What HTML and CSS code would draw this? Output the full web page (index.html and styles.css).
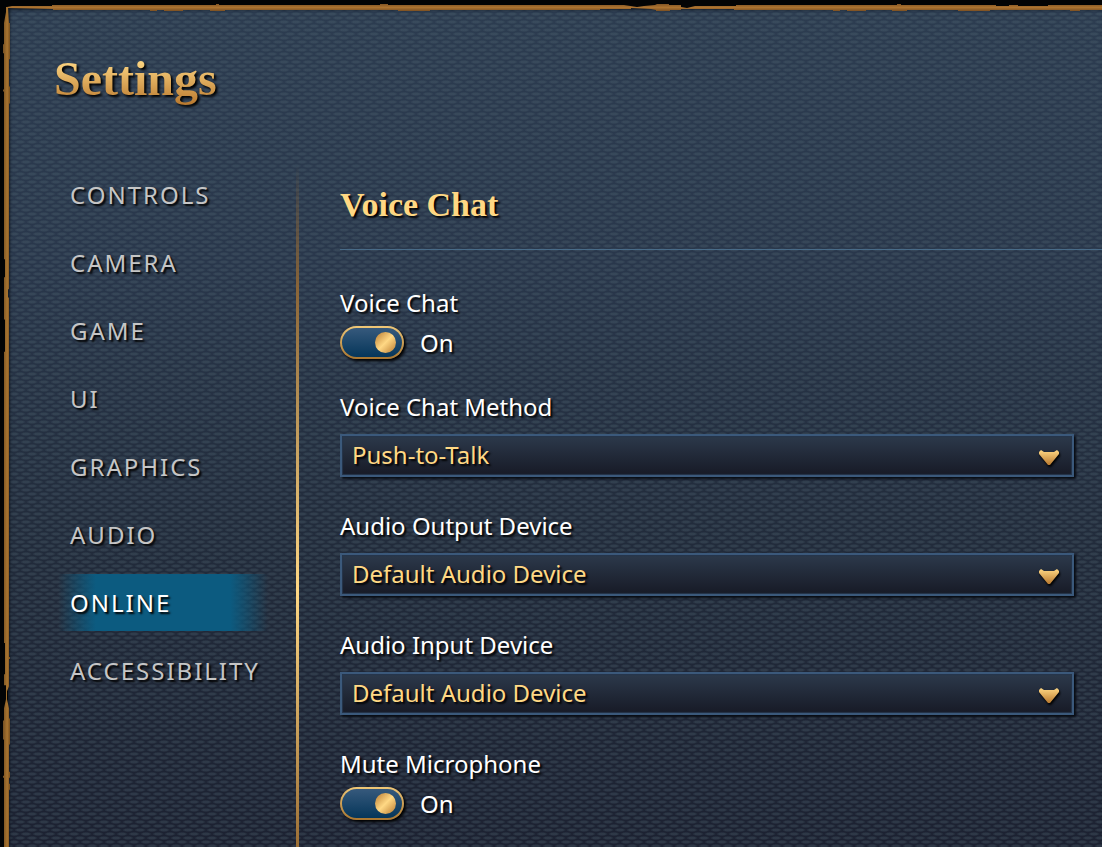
FILE: index.html
```html
<!DOCTYPE html>
<html lang="en">

<head>
	<meta charset="UTF-8">
	<meta name="viewport" content="width=device-width, initial-scale=1.0">
	<title>Settings</title>
	<link rel="stylesheet" href="styles.css">
</head>

<body>
	<div class="panel">
		<header class="panel-header">
			<h1>Settings</h1>
		</header>

		<div class="panel-body">
			<nav class="tabs">
				<a href="#controls">CONTROLS</a>
				<a href="#camera">CAMERA</a>
				<a href="#game">GAME</a>
				<a href="#ui">UI</a>
				<a href="#graphics">GRAPHICS</a>
				<a href="#audio">AUDIO</a>
				<a href="#online" class="active" aria-current="page">ONLINE</a>
				<a href="#accessibility">ACCESSIBILITY</a>
			</nav>

			<main class="content">
				<h2>Voice Chat</h2>

				<form class="fields">
					<div class="field">
						<label for="voice-chat">Voice Chat</label>
						<div class="toggle">
							<input type="checkbox" id="voice-chat" checked>
							<span>On</span>
						</div>
					</div>

					<div class="field">
						<label for="chat-method">Voice Chat Method</label>
						<div class="dropdown">
							<select id="chat-method">
								<option>Push-to-Talk</option>
							</select>
							<svg class="arrow" viewBox="0 0 22 16" aria-hidden="true">
								<path d="M1 2 L3 0 L6 2 H16 L19 0 L21 2 V4 L12 15 H10 L1 4 Z" fill="url(#gold)" />
							</svg>
						</div>
					</div>

					<div class="field">
						<label for="audio-output">Audio Output Device</label>
						<div class="dropdown">
							<select id="audio-output">
								<option>Default Audio Device</option>
							</select>
							<svg class="arrow" viewBox="0 0 22 16" aria-hidden="true">
								<path d="M1 2 L3 0 L6 2 H16 L19 0 L21 2 V4 L12 15 H10 L1 4 Z" fill="url(#gold)" />
							</svg>
						</div>
					</div>

					<div class="field">
						<label for="audio-input">Audio Input Device</label>
						<div class="dropdown">
							<select id="audio-input">
								<option>Default Audio Device</option>
							</select>
							<svg class="arrow" viewBox="0 0 22 16" aria-hidden="true">
								<path d="M1 2 L3 0 L6 2 H16 L19 0 L21 2 V4 L12 15 H10 L1 4 Z" fill="url(#gold)" />
							</svg>
						</div>
					</div>

					<div class="field">
						<label for="mute-mic">Mute Microphone</label>
						<div class="toggle">
							<input type="checkbox" id="mute-mic" checked>
							<span>On</span>
						</div>
					</div>
				</form>
			</main>
		</div>
	</div>

	<!-- Worn gold edges of the panel -->
	<svg class="edge edge-top" viewBox="0 0 1102 12" preserveAspectRatio="none" aria-hidden="true">
		<defs>
			<linearGradient id="gold" x1="0" y1="0" x2="0" y2="1">
				<stop offset="0" stop-color="#ffd884" />
				<stop offset="1" stop-color="#b9792f" />
			</linearGradient>
			<linearGradient id="edge-h" x1="0" y1="0" x2="0" y2="1">
				<stop offset="0" stop-color="#825525" />
				<stop offset=".5" stop-color="#ac7330" />
				<stop offset="1" stop-color="#7b5023" />
			</linearGradient>
		</defs>
		<path fill="url(#edge-h)" d="M7 7 L12 6 H52 V5 H216 V4 H219 V5 H380 V4 H388 V5 H604 V5 H624 L637 7 L644 6 L655 5 L657 4 H669 V5 H681 V7 L687 8 L695 6 H736 V5 H897 V4 H901 V5 H996 V6 H1009 V5 H1018 V6 H1048 V5 H1102 V10 H1080 V11 H1070 V10 H990 V11 H958 V10 H907 V11 H892 V10 H866 V11 H847 V10 H840 V11 H833 V10 H734 V9 H681 V10 H670 V11 H656 V10 L651 9 L631 8 V9 H600 V10 H430 V11 H398 V10 H225 V11 H210 V10 H183 V11 H164 V10 H157 V11 H150 V10 H53 V9 L7 8 Z" />
	</svg>
	<svg class="edge edge-left" viewBox="0 0 12 847" preserveAspectRatio="none" aria-hidden="true">
		<defs>
			<linearGradient id="edge-v">
				<stop offset="0" stop-color="#765022" />
				<stop offset=".6" stop-color="#a87430" />
				<stop offset="1" stop-color="#78501f" />
			</linearGradient>
		</defs>
		<path fill="url(#edge-v)" d="M6 7 H8 L9 23 H10 V59 H9 V86 H10 V103 H9 V288 H8 V296 H9 V654 H10 V656 H9 V683 L7 688 V696 L9 705 V715 H10 V741 H9 V768 H10 V774 H9 V780 H10 V786 H9 V847 H4 V774 H3 V772 H4 V736 H3 V717 H4 V705 L6 696 V682 H4 V671 H5 V640 H4 V350 H5 V318 H4 V276 H5 V258 H4 V91 H3 V89 H4 V53 H3 V44 H4 V23 L6 12 Z" />
	</svg>
</body>

</html>
```
FILE: styles.css
```css
:root {
	--gold: #ffd884;
	--text-color: #fff;
	--tab-color: #c5c5c5;
	--field-border: #3b597b;
	--shadow: 2px 2px 2px #000;
	--dash: radial-gradient(ellipse 6px 2px at 6px 2px, rgba(86, 108, 120, 0.3) 50%, transparent 100%);
}

* {
	box-sizing: border-box;
}

body {
	position: relative;
	margin: 0;
	padding: 8px 0 0 8px;
	min-height: 100vh;
	display: flex;
	background-color: #030405;
	font-family: "Noto Sans", sans-serif;
	font-size: 24px;
	line-height: 32px;
	color: var(--text-color);
}

/* woven cloth: two offset rows of dashes over the base gradient */
.panel {
	flex: 1;
	min-width: 0;
	display: flex;
	flex-direction: column;
	background:
		var(--dash) 0 0 / 12px 8px,
		var(--dash) 6px 4px / 12px 8px,
		linear-gradient(#2c3c50, #29374b 30%, #222c3c 60%, #1c2131);
	box-shadow: inset 2px 2px 3px #111a26;
}

.panel-header {
	padding: 39px 46px 0;
}

h1,
h2 {
	margin: 0;
	font-family: "Liberation Serif", serif;
	font-weight: bold;
}

h1 {
	width: fit-content;
	font-size: 48px;
	line-height: 64px;
	background: linear-gradient(var(--gold) 20%, #b9792f 90%);
	background-clip: text;
	-webkit-background-clip: text;
	color: transparent;
	filter: drop-shadow(2px 2px 1px #000);
}

.panel-body {
	flex: 1;
	display: flex;
	padding-top: 55px;
}

/* Tabs */
.tabs {
	width: 291px;
	flex-shrink: 0;
	display: flex;
	flex-direction: column;
	gap: 11px;
	padding: 0 28px 0 50px;
	border-right: 3px solid;
	border-image: linear-gradient(transparent, #8a6538 18%, var(--gold) 62%, #9a6d34) 1;
}

.tabs a {
	padding: 13px 12px 12px;
	color: var(--tab-color);
	letter-spacing: 2px;
	text-decoration: none;
	text-shadow: var(--shadow);
	white-space: nowrap;
}

.tabs a:hover {
	color: var(--text-color);
}

.tabs a.active {
	color: var(--text-color);
	background: linear-gradient(90deg, transparent, #0c5b80 18%, #0c5b80 82%, transparent);
}

/* Content */
.content {
	flex: 1;
	min-width: 0;
	padding-left: 41px;
}

h2 {
	padding: 15px 0 20px;
	border-bottom: 1px solid #496b88;
	font-size: 34px;
	line-height: 48px;
	color: var(--gold);
	text-shadow: var(--shadow);
}

.fields {
	display: flex;
	flex-direction: column;
	gap: 33px;
	padding: 37px 28px 32px 0;
}

.field > label {
	display: block;
	width: fit-content;
	text-shadow: var(--shadow);
}

.toggle {
	display: flex;
	align-items: center;
	gap: 16px;
	height: 31px;
	margin-top: 8px;
	text-shadow: var(--shadow);
}

.toggle input {
	appearance: none;
	display: flex;
	align-items: center;
	width: 64px;
	height: 33px;
	margin: 0;
	padding: 0 6px;
	border: 2px solid transparent;
	border-radius: 17px;
	background:
		linear-gradient(#36597c, #05365a) padding-box,
		linear-gradient(#f0c878, #a87530) border-box;
	box-shadow: 2px 2px 3px #000;
	cursor: pointer;
}

.toggle input::before {
	content: "";
	width: 21px;
	height: 21px;
	border-radius: 50%;
	background: linear-gradient(135deg, #c68c40 10%, var(--gold) 50%, #c68c40 90%);
}

.toggle input:checked {
	justify-content: flex-end;
}

.dropdown {
	position: relative;
	margin-top: 11px;
}

.dropdown select {
	appearance: none;
	display: block;
	width: 100%;
	height: 43px;
	padding: 0 48px 2px 10px;
	border: 2px solid var(--field-border);
	border-radius: 0;
	background: linear-gradient(#2c394b, #171a26);
	box-shadow: 2px 2px 2px #080c14, inset 0 0 1px 1px #26364c;
	font: inherit;
	color: var(--gold);
	text-shadow: var(--shadow);
	cursor: pointer;
}

/* sits over the select */
.arrow {
	position: absolute;
	top: 16px;
	right: 14px;
	width: 22px;
	height: 16px;
	filter: drop-shadow(1px 2px 1px #000);
	pointer-events: none;
}

/* Edges lie over the panel border */
.edge {
	position: absolute;
	top: 0;
	left: 0;
	pointer-events: none;
}

.edge-top {
	width: 100%;
	height: 12px;
}

.edge-left {
	width: 12px;
	height: 100%;
}
```
